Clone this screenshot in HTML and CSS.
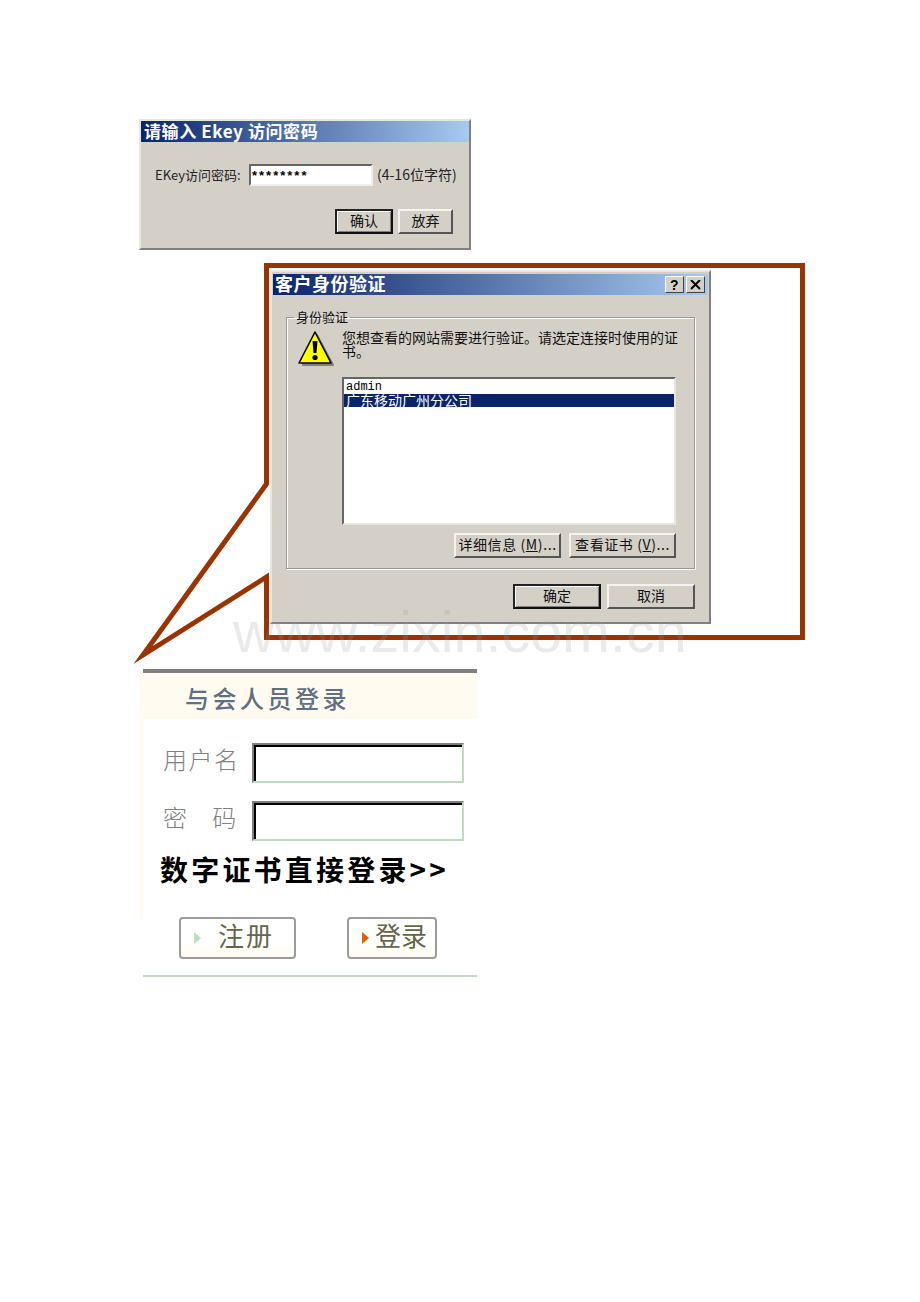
FILE: index.html
```html
<!DOCTYPE html>
<html lang="zh-CN">
<head>
    <meta charset="UTF-8">
    <title>数字证书登录</title>
    <link rel="stylesheet" href="styles.css">
</head>
<body>
    <div class="page">
        <!-- callout -->
        <svg class="callout" width="920" height="700" viewBox="0 0 920 700">
            <polygon points="266.5,265.5 802.5,265.5 802.5,637.5 266.5,637.5 266.5,577 143,655 266.5,484" fill="#fff" stroke="#993300" stroke-width="5" stroke-miterlimit="20"/>
        </svg>

        <div class="dialog ekey">
            <div class="titlebar ekey-title">请输入 Ekey 访问密码</div>
            <div class="ekey-row">
                <span class="ekey-label">EKey访问密码:</span>
                <div class="ekey-input">********</div>
                <span class="ekey-hint">(4-16位字符)</span>
            </div>
            <div class="ekey-actions">
                <div class="btn btn-default ekey-ok">确认</div>
                <div class="btn ekey-cancel">放弃</div>
            </div>
        </div>

        <div class="dialog cert">
            <div class="titlebar cert-title">
                <span>客户身份验证</span>
                <div class="title-btns">
                    <div class="title-btn">?</div>
                    <div class="title-btn">
                        <svg width="11" height="10" viewBox="0 0 11 10"><path d="M1 0 L10 9 M10 0 L1 9" stroke="#000" stroke-width="2"/></svg>
                    </div>
                </div>
            </div>
            <fieldset class="group">
                <legend>身份验证</legend>
                <div class="group-top">
                    <svg class="warn" width="37" height="38" viewBox="0 0 37 38">
                        <path d="M20 5 L36 35 L6 35 Z" fill="#808080" stroke="#808080" stroke-width="2" stroke-linejoin="round"/>
                        <path d="M18 2 L34 33 L2 33 Z" fill="#ffff00" stroke="#000" stroke-width="1.6" stroke-linejoin="round"/>
                        <path d="M15.5 11 h5 l-1 12 h-3 Z" fill="#000"/>
                        <circle cx="18" cy="27.5" r="2.6" fill="#000"/>
                    </svg>
                    <p class="cert-msg">您想查看的网站需要进行验证。请选定连接时使用的证<br>书。</p>
                </div>
                <div class="cert-list">
                    <div class="cert-item">admin</div>
                    <div class="cert-item selected">广东移动广州分公司</div>
                </div>
                <div class="cert-actions">
                    <div class="btn cert-btn">详细信息 (<u>M</u>)...</div>
                    <div class="btn cert-btn">查看证书 (<u>V</u>)...</div>
                </div>
            </fieldset>
            <div class="cert-footer">
                <div class="btn btn-default cert-foot-btn">确定</div>
                <div class="btn cert-foot-btn">取消</div>
            </div>
        </div>

        <div class="watermark">www.zixin.com.cn</div>

        <div class="login">
            <div class="login-rule"></div>
            <div class="login-head">与会人员登录</div>
            <div class="login-body">
                <div class="login-row">
                    <span class="login-label">用户名</span>
                    <div class="login-input"></div>
                </div>
                <div class="login-row">
                    <span class="login-label">密 码</span>
                    <div class="login-input"></div>
                </div>
                <div class="login-link">数字证书直接登录&gt;&gt;</div>
            </div>
            <div class="login-actions">
                <div class="login-btn reg"><i class="arrow arrow-green"></i><span>注册</span></div>
                <div class="login-btn sub"><i class="arrow arrow-orange"></i><span>登录</span></div>
            </div>
        </div>
    </div>
</body>
</html>
```

FILE: styles.css
```css
body {
    margin: 0;
    background: #fff;
    font-family: "Noto Sans CJK SC", "Liberation Sans", sans-serif;
}
.page {
    position: relative;
    width: 920px;
    height: 1302px;
    overflow: hidden;
}
.callout {
    position: absolute;
    left: 0;
    top: 0;
}

/* win2k style dialogs */
.dialog {
    position: absolute;
    box-sizing: border-box;
    background: #d4d0c8;
    border: 2px solid;
    border-color: #e8e6e0 #808080 #808080 #e8e6e0;
}
.titlebar {
    display: flex;
    align-items: center;
    box-sizing: border-box;
    background: linear-gradient(to right, #0a246a, #a6caf0);
    color: #fff;
    font-weight: bold;
    white-space: nowrap;
}
.btn {
    display: flex;
    align-items: center;
    justify-content: center;
    box-sizing: border-box;
    padding-bottom: 3px;
    color: #111;
    font-size: 14px;
    background: #d4d0c8;
    border: 2px solid;
    border-color: #f4f3f0 #555 #555 #f4f3f0;
}
.btn-default {
    border: 2px solid;
    border-color: #222 #111 #111 #222;
    box-shadow: inset 1px 1px 0 #fff, inset -1px -1px 0 #808080;
}

.ekey {
    left: 139px;
    top: 119px;
    width: 332px;
    height: 131px;
}
.ekey-title {
    height: 21px;
    padding: 0 0 3px 3px;
    font-size: 17px;
    letter-spacing: 0.6px;
}
.ekey-row {
    display: flex;
    align-items: center;
    margin-top: 22px;
    padding-left: 14px;
    font-size: 13px;
    color: #222;
}
.ekey-label {
    width: 94px;
    padding-bottom: 2px;
    white-space: nowrap;
}
.ekey-input {
    box-sizing: border-box;
    width: 124px;
    height: 22px;
    padding-left: 1px;
    background: #fff;
    border: 2px solid;
    border-color: #666 #eee #eee #666;
    color: #000;
    font-size: 13px;
    line-height: 20px;
    letter-spacing: 2px;
    font-family: "Liberation Sans", sans-serif;
    font-weight: bold;
}
.ekey-hint {
    margin-left: 4px;
    padding-bottom: 2px;
    font-size: 14px;
    white-space: nowrap;
}
.ekey-actions {
    display: flex;
    gap: 5px;
    margin-top: 23px;
    padding-left: 194px;
}
.ekey-ok {
    width: 58px;
    height: 25px;
}
.ekey-cancel {
    width: 55px;
    height: 25px;
}

.cert {
    left: 270px;
    top: 270px;
    width: 441px;
    height: 354px;
    padding: 2px 1px;
    z-index: 1;
}
.cert-title {
    justify-content: space-between;
    height: 21px;
    padding: 0 3px 0 2px;
    font-size: 18px;
    letter-spacing: 0.5px;
}
.cert-title span {
    padding-bottom: 3px;
}
.title-btns {
    display: flex;
    gap: 2px;
}
.title-btn {
    display: flex;
    align-items: center;
    justify-content: center;
    box-sizing: border-box;
    width: 19px;
    height: 17px;
    background: #d4d0c8;
    border: 1px solid;
    border-color: #fff #444 #444 #fff;
    color: #000;
    font-size: 14px;
    line-height: 1;
    font-weight: bold;
    font-family: "Liberation Sans", sans-serif;
}
.group {
    box-sizing: border-box;
    min-width: 0;
    width: 409px;
    height: 259px;
    margin: 15px 0 0 13px;
    padding: 0 10px;
    border: 1px solid #9a9890;
    box-shadow: 1px 1px 0 #fff, inset 1px 1px 0 #fff;
}
.group legend {
    margin: 0 0 4px -3px;
    padding: 0 2px;
    font-size: 13px;
    line-height: 14px;
    color: #111;
}
.group-top {
    display: flex;
    align-items: flex-start;
    margin-top: 2px;
}
.warn {
    flex: none;
}
.cert-msg {
    margin: 0 0 0 8px;
    font-size: 14px;
    line-height: 14px;
    color: #111;
    white-space: nowrap;
}
.cert-list {
    box-sizing: border-box;
    width: 334px;
    height: 148px;
    margin: 9px 0 0 45px;
    padding-top: 2px;
    background: #fff;
    border: 2px solid;
    border-color: #666 #e8e6e0 #e8e6e0 #666;
}
.cert-item {
    height: 13px;
    padding-left: 2px;
    font-size: 14px;
    line-height: 13px;
    color: #000;
}
.cert-item:first-child {
    font-family: "Liberation Mono", monospace;
    font-size: 12px;
}
.cert-item.selected {
    background: #0a246a;
    color: #fff;
}
.cert-actions {
    display: flex;
    justify-content: flex-end;
    gap: 8px;
    width: 379px;
    margin: 8px 0 0 0;
}
.cert-btn {
    width: 107px;
    height: 25px;
    letter-spacing: 0.6px;
    white-space: nowrap;
}
.cert-footer {
    display: flex;
    justify-content: flex-end;
    gap: 6px;
    margin-top: 15px;
    padding-right: 13px;
}
.cert-foot-btn {
    width: 88px;
    height: 25px;
}

.watermark {
    position: absolute;
    left: 233px;
    top: 597px;
    z-index: 2;
    font-family: "Liberation Sans", sans-serif;
    font-size: 57.5px;
    line-height: 70px;
    color: rgba(150, 150, 150, 0.2);
    white-space: nowrap;
}

/* login panel */
.login {
    position: absolute;
    left: 140px;
    top: 669px;
    width: 337px;
}
.login-rule {
    height: 4px;
    margin-left: 3px;
    background: #808080;
}
.login-head {
    height: 46px;
    padding-left: 45px;
    background: #fffbf0;
    color: #5e7082;
    font-size: 24px;
    line-height: 50px;
    letter-spacing: 3.5px;
    font-weight: 500;
    white-space: nowrap;
}
.login-body {
    box-sizing: border-box;
    height: 200px;
    padding-top: 24px;
    border-left: 3px solid #fffbf0;
}
.login-row {
    display: flex;
    align-items: center;
    height: 40px;
    margin-bottom: 18px;
    padding-left: 20px;
}
.login-label {
    width: 89px;
    padding-bottom: 9px;
    color: #808080;
    font-size: 24px;
    letter-spacing: 1.5px;
    word-spacing: 17px;
    font-weight: 300;
    white-space: nowrap;
}
.login-input {
    box-sizing: border-box;
    width: 212px;
    height: 40px;
    background: #fff;
    border-style: solid;
    border-width: 2px;
    border-color: #808080 #c0dcc0 #c0dcc0 #808080;
    box-shadow: inset 2px 2px 0 #000;
}
.login-link {
    margin: -8px 0 0 17px;
    color: #000;
    font-size: 28px;
    line-height: 36px;
    letter-spacing: 3.2px;
    font-weight: bold;
    white-space: nowrap;
}
.login-actions {
    display: flex;
    align-items: flex-start;
    box-sizing: border-box;
    height: 58px;
    margin-left: 3px;
    padding: 0 0 0 36px;
    gap: 51px;
    border-bottom: 2px solid #c0dcc0;
}
.login-btn {
    display: flex;
    align-items: center;
    box-sizing: border-box;
    height: 42px;
    margin-top: -2px;
    background: linear-gradient(to bottom, #fff 60%, #fffbf0);
    border: 2px solid #9c9c9c;
    border-radius: 4px;
    color: #66664a;
    font-size: 26px;
    white-space: nowrap;
}
.login-btn span {
    padding-bottom: 7px;
}
.reg {
    width: 117px;
    padding-left: 13px;
    letter-spacing: 2px;
}
.sub {
    width: 90px;
    padding-left: 13px;
}
.arrow {
    flex: none;
    width: 0;
    height: 0;
    border-style: solid;
    border-width: 6px 0 6px 7px;
    border-color: transparent;
}
.arrow-green {
    border-left-color: #c0dcc0;
    margin-right: 17px;
}
.arrow-orange {
    border-left-color: #e06000;
    margin-right: 6px;
}
```
